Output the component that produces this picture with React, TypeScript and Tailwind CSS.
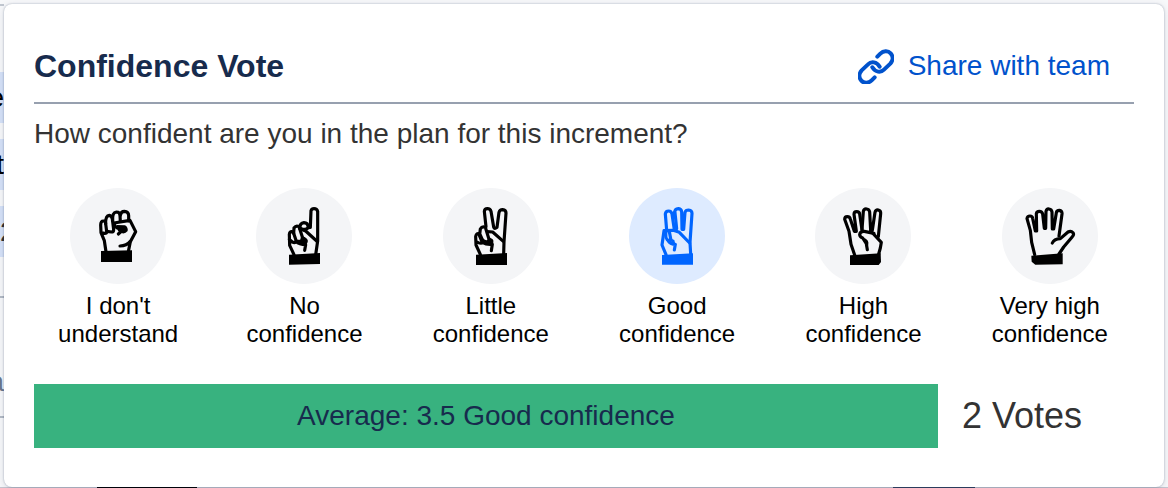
import { FunctionComponent, ReactNode } from "react";
import clsx from "clsx";

type VoteOption = {
  id: string;
  label: string;
  viewBox: string;
  hand: ReactNode;
}

const options: VoteOption[] = [
  {
    id: "none",
    label: "I don't understand",
    viewBox: "30 24 288 288",
    hand: (
      <>
        <path d="M138 215 L133 182 L123 158 L122 135 Q122 123 130 123 Q137 123 137 131 L140 155 Q140 160 134 160 L123 158" />
        <path d="M137 131 Q136 107 148 106 Q155 107 157 117 L161 149 Q161 156 154 156 L141 154" />
        <path d="M158 122 Q156 97 169 96 Q180 96 180 106 L181 124" />
        <path d="M181 106 Q183 94 193 94 Q206 95 206 107 L206 123" />
        <path d="M162 129 L210 121 L227 155 L211 185 L205 215" />
        <path d="M180 198 Q200 198 211 184" />
        <path d="M163 130 Q163 143 178 146 L188 150 L175 162" />
        <path d="M170 135 L195 136 Q205 142 203 153 Q195 163 184 159 L174 153 Z" fill="currentColor" stroke="none" />
        <path d="M123 213 L216 211 L216 246 L123 246 Z" fill="currentColor" stroke="none" />
      </>
    ),
  },
  {
    id: "no",
    label: "No confidence",
    viewBox: "30 24 288 288",
    hand: (
      <>
        <path d="M144 224 L131 196 L130 163 Q131 154 138 155 L143 160 L151 184 Q147 190 139 186 L130 178" />
        <path d="M143 160 L144 144 Q150 135 159 140 L171 177 Q170 187 160 184 L150 184" />
        <path d="M162 146 Q160 130 174 128 Q186 128 187 143 L193 142 L195 92 Q197 86 204 86 Q213 86 215 94 L215 183 L209 224" />
        <path d="M162 146 L179 153 L212 183 M164 145 Q180 153 187 142" />
        <path d="M150 184 Q160 194 179 194 L176 211" />
        <path d="M166 168 L176 171 Q188 178 185 186 L180 198 L159 190 Z" fill="currentColor" stroke="none" />
        <path d="M129 224 L222 219 L222 252 L129 254 Z" fill="currentColor" stroke="none" />
      </>
    ),
  },
  {
    id: "little",
    label: "Little confidence",
    viewBox: "33 24 288 288",
    hand: (
      <>
        <path d="M145 223 L132 195 L131 170 Q132 160 140 161 L151 188 Q148 192 137 187" />
        <path d="M143 164 L145 147 Q150 138 160 142 L171 178 Q171 187 160 185 Q154 184 151 179 L144 163" />
        <path d="M162 140 L157 94 Q158 86 166 86 Q175 86 177 94 L185 141 Q187 149 195 142 L201 97 Q203 89 212 89 Q222 90 222 99 L216 186 L215 222" />
        <path d="M166 155 L182 156 L214 184" />
        <path d="M151 187 Q164 195 181 193 L178 212" />
        <path d="M170 172 Q187 177 184 187 L180 196 L162 191 Z" fill="currentColor" stroke="none" />
        <path d="M132 224 L225 219 L225 255 L132 255 Z" fill="currentColor" stroke="none" />
      </>
    ),
  },
  {
    id: "good",
    label: "Good confidence",
    viewBox: "33 24 288 288",
    hand: (
      <>
        <path d="M144 224 L132 195 L138 152 L166 151 L184 157 L215 189" />
        <path d="M146 151 L142 102 Q143 93 152 93 Q160 93 162 102 L169 149" />
        <path d="M166 107 L171 92 Q174 86 182 86 Q190 87 191 96 L192 148 L197 148 L201 97 Q203 90 212 90 Q222 91 222 100 L216 187 L218 222" />
        <path d="M171 98 L176 146" />
        <path d="M144 153 Q141 178 151 181 L159 181 L154 155" />
        <path d="M151 183 Q158 193 172 193 L169 210" />
        <path d="M160 176 L169 180 L172 193 L161 191 Z" fill="currentColor" stroke="none" />
        <path d="M132 225 L225 220 L225 254 L132 254 Z" fill="currentColor" stroke="none" />
      </>
    ),
  },
  {
    id: "high",
    label: "High confidence",
    viewBox: "36 24 288 288",
    hand: (
      <>
        <path d="M155 225 L144 193 L138 154 L125 118 Q125 110 133 110 Q140 110 142 117 L154 154 L160 154 L153 103 Q153 95 161 95 Q169 95 170 102 L177 149" />
        <path d="M177 149 L181 94 Q183 86 191 87 Q199 88 200 96 L203 151 L208 151 L216 97 Q218 89 226 90 Q234 92 233 101 L226 170" />
        <path d="M213 160 L184 154 Q171 153 170 164 Q171 171 179 174 L190 191 L193 209" />
        <path d="M203 153 L235 187 L232 204 L227 222" />
        <path d="M184 173 Q198 181 196 191 L193 211 L188 198 Z" fill="currentColor" stroke="none" />
        <path d="M141 226 L233 220 L234 246 L227 255 L141 255 Z" fill="currentColor" stroke="none" />
      </>
    ),
  },
  {
    id: "very-high",
    label: "Very high confidence",
    viewBox: "36 24 288 288",
    hand: (
      <>
        <path d="M134 224 L125 187 L121 151 L111 116 Q112 108 120 108 Q127 108 128 115 L136 153 L140 153 L139 101 Q140 94 148 94 Q156 94 158 102 L163 145 L167 145 L168 94 Q170 86 177 87 Q185 88 186 96 L187 147 L191 147 L199 98 Q200 91 208 91 Q217 93 216 102 L207 168" />
        <path d="M187 189 Q192 177 211 176 L234 156 Q243 151 249 158 Q253 164 247 170 L221 201 L207 222" />
        <path d="M124 227 L218 220 L218 253 L136 254 L125 245 Z" fill="currentColor" stroke="none" />
      </>
    ),
  },
];

type OptionButtonProps = {
  option: VoteOption;
  selected: boolean;
}

const OptionButton: FunctionComponent<OptionButtonProps> = ({option, selected}) => {
  return (
    <button type="button" aria-pressed={selected} className="flex flex-col items-center gap-2">
      <span
        className={clsx(
          "flex size-24 rounded-full",
          selected ? "bg-[#deebff] text-[#0065ff]" : "bg-[#f4f5f7] text-black"
        )}
      >
        <svg
          viewBox={option.viewBox}
          className="size-24"
          fill="none"
          stroke="currentColor"
          strokeWidth="9.5"
          strokeLinecap="round"
          strokeLinejoin="round"
          aria-hidden="true"
        >
          {option.hand}
        </svg>
      </span>
      <span className="w-32 text-2xl leading-7 text-black">{option.label}</span>
    </button>
  )
}

function LinkIcon() {
  const half = "M112 80 L121 71 C130 62 144 61 152 70 C160 79 159 92 151 101 L132 119 C122 129 106 127 97 112";
  return (
    <svg
      viewBox="54 54 108 108"
      className="size-9"
      fill="none"
      stroke="currentColor"
      strokeWidth="12"
      strokeLinecap="round"
      strokeLinejoin="round"
      aria-hidden="true"
    >
      <path d={half} />
      <path d={half} transform="rotate(180 108 111)" />
    </svg>
  )
}

// sliver of the board that stays visible beside the dialog
function BoardEdge() {
  return (
    <div className="flex w-1 shrink-0 flex-col overflow-hidden text-[28px] leading-[51px] text-black" aria-hidden="true">
      <div className="mt-1 h-0.5 bg-[#c1c7d0]" />
      <div className="mt-[66px] flex h-[51px] justify-end bg-[#d6e2f8]">e</div>
      <div className="mt-4 flex h-[51px] justify-end bg-[#d6e2f8]">t</div>
      <div className="mt-4 flex h-[51px] justify-start bg-[#d6e2f8] text-[#333333]">2</div>
      <div className="mt-[39px] h-0.5 bg-[#b3bac5]" />
      <div className="mt-[58px] flex h-[51px] justify-end text-[#6b778c]">a</div>
      <div className="mt-[9px] h-0.5 bg-[#b3bac5]" />
    </div>
  )
}

const App: FunctionComponent = () => {
  return (
    <div className="bg-[#f7f8fa] font-['Liberation_Sans',Arial,sans-serif]">
      <div className="flex">
        <BoardEdge />
        <main className="relative mt-1 min-w-0 flex-1 rounded-lg bg-white px-[30px] pt-[42px] pb-[39px] shadow-[0_0_2px_rgba(9,30,66,0.35),0_2px_8px_rgba(9,30,66,0.12)]">
          <header className="flex items-center justify-between border-b-2 border-[#97a0af] pr-6 pb-4">
            <h1 className="text-[32px] leading-10 font-bold text-[#172b4d]">Confidence Vote</h1>
            <a href="#share" className="flex items-center gap-3.5 text-[28px] leading-10 text-[#0052cc]">
              <LinkIcon />
              Share with team
            </a>
          </header>
          <p className="mt-3 text-[28px] leading-9 text-[#333333]">
            How confident are you in the plan for this increment?
          </p>
          <div className="mt-9 grid grid-cols-6 gap-x-[18px]">
            { options.map(option =>
              <OptionButton key={option.id} option={option} selected={option.id === "good"} />
            )}
          </div>
          <div className="mt-9 flex items-center gap-6">
            <div className="flex h-16 flex-1 items-center justify-center bg-[#38b27f] text-[28px] text-[#172b4d]">
              Average: 3.5 Good confidence
            </div>
            <p className="w-[172px] text-4xl text-[#333333]">2 Votes</p>
          </div>
        </main>
        <div className="w-1 shrink-0" />
      </div>
      <div className="flex h-px justify-between bg-[#c5c6d0] pr-[193px] pl-[97px]">
        <div className="w-[100px] bg-black" />
        <div className="w-[82px] bg-[#344563]" />
      </div>
    </div>
  )
}

export default App;
